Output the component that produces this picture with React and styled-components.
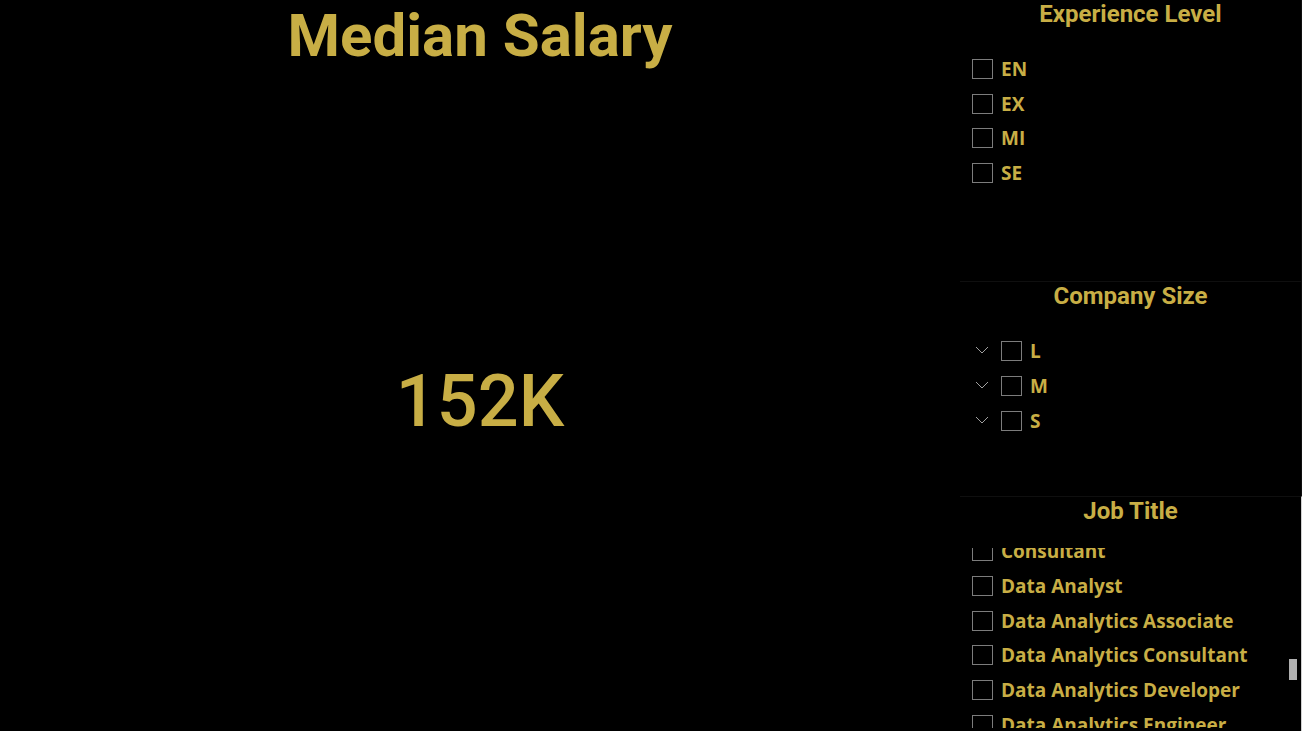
import React from "react";
import styled, { createGlobalStyle } from "styled-components";

const GlobalStyle = createGlobalStyle`
  * { box-sizing: border-box; }
  body { margin: 0; background: #000; color: #c8ae45; }
`;

const Dashboard = styled.div`
  display: grid;
  grid-template-columns: minmax(0, 1fr) 342px;
  min-height: 100vh;
  background: #000;
`;

const Card = styled.main`
  display: flex;
  flex-direction: column;
  align-items: center;
  font-family: Roboto, sans-serif;
`;

const CardTitle = styled.h1`
  margin: 0;
  font-size: 60px;
  line-height: 72px;
  font-weight: 700;
`;

const CardValue = styled.output`
  flex: 1;
  display: flex;
  align-items: center;
  font-size: 72px;
  line-height: 80px;
  font-weight: 500;
`;

const Sidebar = styled.aside`
  display: grid;
  grid-template-rows: 281px 215px minmax(0, 1fr);
  height: 100vh;
`;

const Panel = styled.section`
  position: relative;
  display: flex;
  flex-direction: column;
  min-height: 0;
  padding-bottom: 3px;
  border-top: ${({ $divided }) => ($divided ? "1px solid #0f0f0f" : "none")};
  border-right: 1px solid ${({ $edge }) => $edge || "#0f0f0f"};
`;

const PanelTitle = styled.h2`
  margin: 0;
  font-family: Roboto, sans-serif;
  font-size: 24px;
  line-height: 28px;
  font-weight: 700;
  text-align: center;
`;

const Options = styled.div`
  display: grid;
  grid-auto-rows: 1fr;
  flex: none;
  height: ${({ $height }) => $height}px;
  margin-top: ${({ $gap }) => $gap || 0}px;
  padding-left: 12px;
`;

const Viewport = styled.div`
  flex: 1;
  min-height: 0;
  display: flex;
  align-items: center;
  margin-top: 23px;
  overflow: hidden;
`;

const Row = styled.div`
  display: flex;
  align-items: center;
`;

const Option = styled.label`
  display: flex;
  align-items: center;
  gap: 8px;
  font-family: "Open Sans", "Noto Sans", sans-serif;
  font-size: 19px;
  line-height: 26px;
  font-weight: 700;
  white-space: nowrap;
`;

const Checkbox = styled.input`
  appearance: none;
  width: 21px;
  height: 20px;
  margin: 0;
  border: 1px solid #7c7c7c;
  background: #000;
  &:checked { background: #c8ae45; }
`;

const Expander = styled.button`
  display: flex;
  align-items: center;
  justify-content: center;
  width: 21px;
  height: 20px;
  margin: 0 8px 0 0;
  padding: 0;
  border: 0;
  background: none;
  color: #a0a0a0;
`;

const ScrollThumb = styled.div`
  position: absolute;
  right: 4px;
  bottom: 51px;
  width: 8px;
  height: 21px;
  background: #b0b0b0;
`;

const levels = ["EN", "EX", "MI", "SE"];
const sizes = ["L", "M", "S"];
const jobs = [
  "Consultant",
  "Data Analyst",
  "Data Analytics Associate",
  "Data Analytics Consultant",
  "Data Analytics Developer",
  "Data Analytics Engineer",
];

function CheckRow({ label, expandable }) {
  return (
    <Row>
      {expandable && (
        <Expander type="button" aria-label={`Expand ${label}`}>
          <svg width="15" height="10" viewBox="0 0 15 10" fill="none" stroke="currentColor">
            <path d="M1 1 L7 7 L13 1" />
          </svg>
        </Expander>
      )}
      <Option>
        <Checkbox type="checkbox" />
        <span>{label}</span>
      </Option>
    </Row>
  );
}

export default function App() {
  return (
    <>
      <GlobalStyle />
      <Dashboard>
        <Card>
          <CardTitle>Median Salary</CardTitle>
          <CardValue>152K</CardValue>
        </Card>
        <Sidebar>
          <Panel>
            <PanelTitle>Experience Level</PanelTitle>
            <Options $height={138} $gap={24}>
              {levels.map((l) => <CheckRow key={l} label={l} />)}
            </Options>
          </Panel>
          <Panel $divided>
            <PanelTitle>Company Size</PanelTitle>
            <Options $height={104} $gap={24}>
              {sizes.map((l) => <CheckRow key={l} label={l} expandable />)}
            </Options>
          </Panel>
          <Panel $divided $edge="#d0d0d0">
            <PanelTitle>Job Title</PanelTitle>
            <Viewport>
              <Options $height={208}>
                {jobs.map((l) => <CheckRow key={l} label={l} />)}
              </Options>
            </Viewport>
            <ScrollThumb />
          </Panel>
        </Sidebar>
      </Dashboard>
    </>
  );
}
